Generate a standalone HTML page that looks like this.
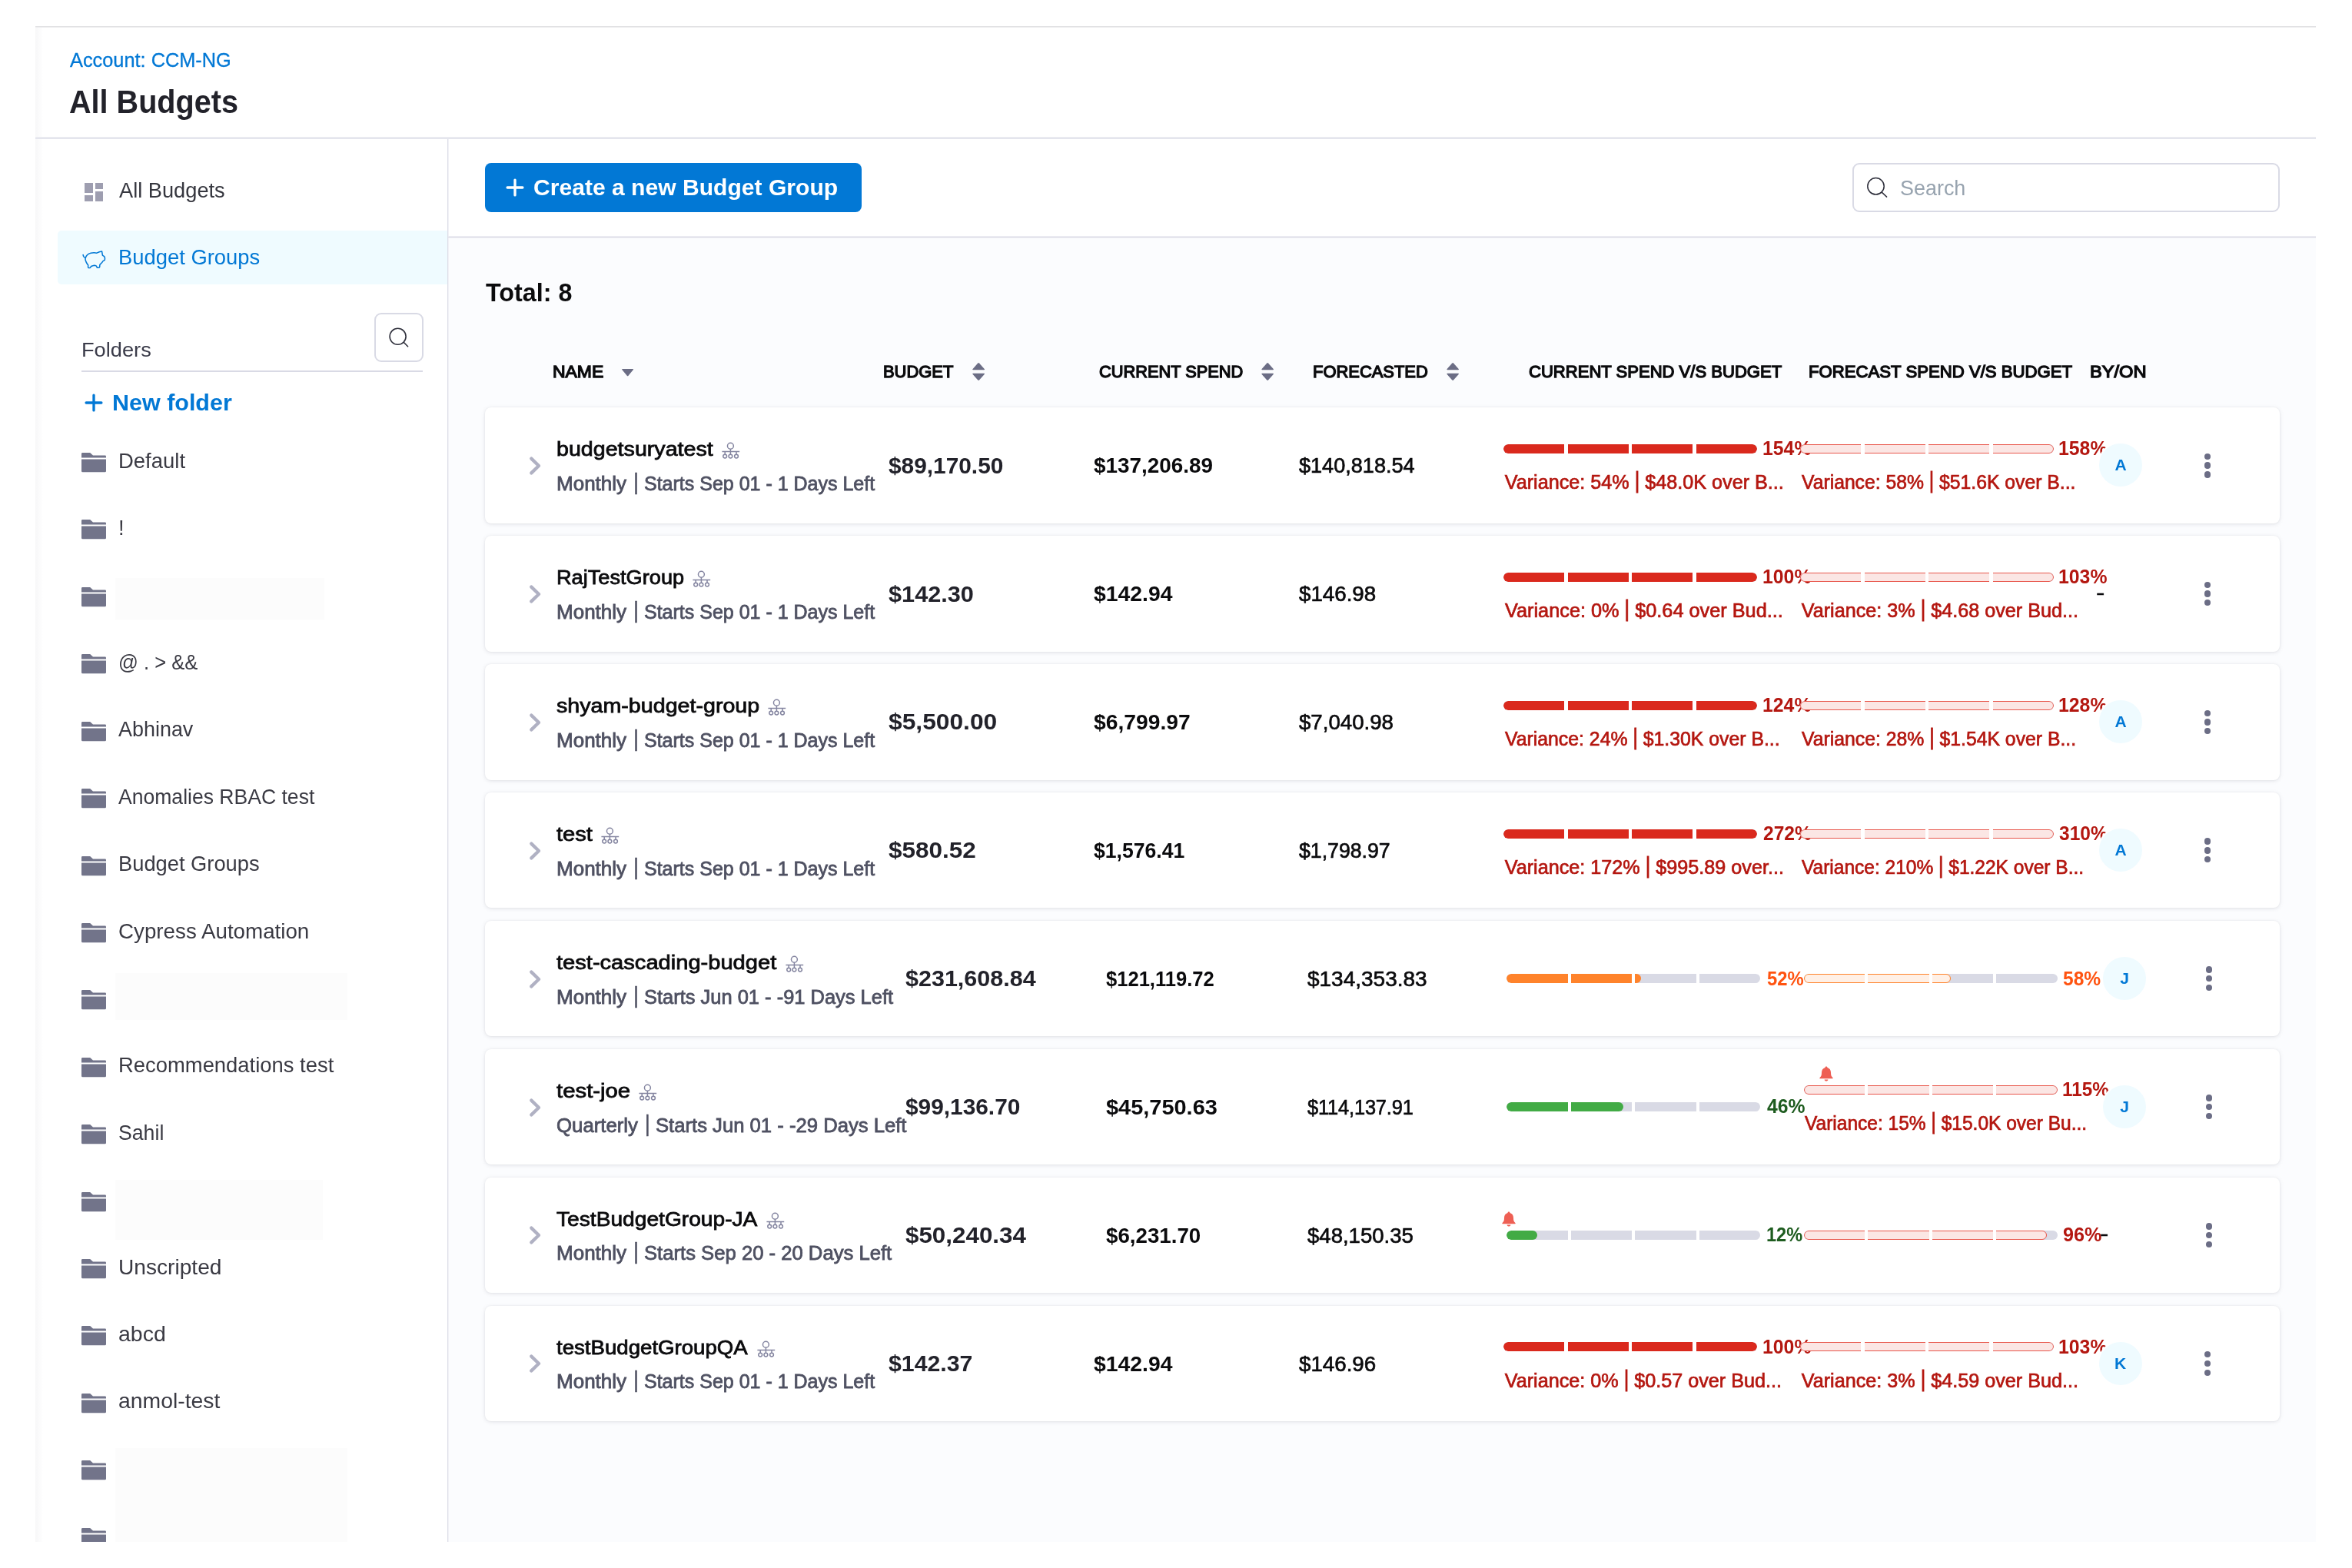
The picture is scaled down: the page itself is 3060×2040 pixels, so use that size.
<!DOCTYPE html>
<html lang="en"><head><meta charset="utf-8"><title>All Budgets</title>
<style>
html,body{margin:0;padding:0;}
body{width:3060px;height:2040px;position:relative;overflow:hidden;background:#fff;font-family:"Liberation Sans",sans-serif;}
body div,body svg,body span{position:absolute;}
span{line-height:1;white-space:pre;transform-origin:0 0;}
svg{overflow:visible;}
span i{display:inline-block;font-style:normal;transform:scaleY(1.17);transform-origin:50% 104%;}
</style></head><body><div id="root" style="left:0;top:0;width:3060px;height:2040px;will-change:transform;">
<div style="left:46px;top:34px;width:2967px;height:1px;background:#E1E1E3;"></div>
<div style="left:46px;top:35px;width:2967px;height:1px;background:#EDEDEF;"></div>
<div style="left:46px;top:36px;width:2967px;height:1970px;background:#fff;"></div>
<div style="left:46px;top:36px;width:10px;height:1970px;background:linear-gradient(90deg,#F7F7F8,#fff);"></div>
<div style="left:583px;top:309px;width:2430px;height:1697px;background:#FBFCFE;"></div>
<div style="left:46px;top:178px;width:2967px;height:1px;background:#F3F3F7;"></div>
<div style="left:46px;top:179px;width:2967px;height:1px;background:#DADBE6;"></div>
<div style="left:46px;top:180px;width:2967px;height:1px;background:#E9E9F0;"></div>
<div style="left:582px;top:181px;width:1px;height:1825px;background:#DCDDE7;"></div>
<div style="left:583px;top:181px;width:1px;height:1825px;background:#F1F1F6;"></div>
<div style="left:583px;top:307px;width:2430px;height:1px;background:#EEEEF3;"></div>
<div style="left:583px;top:308px;width:2430px;height:1px;background:#DADBE6;"></div>
<div style="left:583px;top:309px;width:2430px;height:1px;background:#F0F0F5;"></div>
<span style="left:90.80px;top:66.00px;font-size:25.2px;color:#0278D5;-webkit-text-stroke:0.3px #0278D5;transform:scaleX(1.0060);">Account: CCM-NG</span>
<span style="left:90.36px;top:112.00px;font-size:42.0px;color:#22222A;font-weight:700;transform:scaleX(0.9427);">All Budgets</span>
<div style="left:110.3px;top:238.1px;width:10.4px;height:12.5px;background:#9E9EB0;"></div>
<div style="left:110.3px;top:254.2px;width:10.4px;height:7.5px;background:#9E9EB0;"></div>
<div style="left:123.7px;top:238.1px;width:10.3px;height:7.8px;background:#9E9EB0;"></div>
<div style="left:123.7px;top:249.2px;width:10.3px;height:12.5px;background:#9E9EB0;"></div>
<span style="left:155.00px;top:234.00px;font-size:27.3px;color:#36373F;transform:scaleX(0.9971);">All Budgets</span>
<div style="left:74.5px;top:300px;width:507px;height:70.4px;background:#EFFBFF;border-radius:5px 0 0 5px;"></div>
<svg style="left:106.5px;top:325.3px;" width="31.6" height="25.1" viewBox="0 0 34 27"><path d="M1.2 7 C1.4 9 2.2 10.6 4.6 11.2 C5.5 8.2 8 5.6 12 4.6 C15 3.8 18 3.9 20.4 4.5 C22.5 3.2 25 2.3 27.5 2.1 C27.8 4 28 6 28.6 8 C29.8 8.6 30.6 9.2 31.2 9.8 C31.8 11 31.8 13 31.5 14.3 C30.9 15 30.2 15.3 29.3 15.5 C28.3 17.2 27 18.6 25.7 19.7 L24.6 21 C24.6 22.3 24.5 23.5 24.2 24.6 C23 25.2 21.8 25.2 20.8 25 L19.9 22.8 C18.9 22.3 17.8 22 16.8 21.9 C15.3 22.2 13.8 22.7 12.3 23.2 L11.4 25 C10.3 25.3 9.3 25.3 8.3 25 C8.1 23.8 8.1 22.6 8.3 21.45 C7.2 20.3 6.3 19 5.6 17.4 C4.9 16 4.4 14.5 4.3 13 C4.3 12.3 4.4 11.7 4.6 11.2" fill="none" stroke="#0278D5" stroke-width="1.65" stroke-linejoin="round" stroke-linecap="round"/></svg>
<span style="left:153.64px;top:321.00px;font-size:27.3px;color:#0278D5;transform:scaleX(1.0031);">Budget Groups</span>
<span style="left:105.60px;top:442.00px;font-size:26.6px;color:#3B3C4A;transform:scaleX(1.0234);">Folders</span>
<div style="left:487px;top:407px;width:63.5px;height:63.5px;background:#fff;border:2px solid #D9DAE5;border-radius:9px;box-sizing:border-box;"></div>
<svg style="left:500px;top:421px;" width="38" height="38" viewBox="0 0 38 38"><circle cx="17.6" cy="16.8" r="10.5" fill="none" stroke="#2E2F3B" stroke-width="1.6"/><path d="M25.2 24.3 L30.6 29.8" stroke="#2E2F3B" stroke-width="1.6" stroke-linecap="round"/></svg>
<div style="left:106.3px;top:482.2px;width:443.9px;height:2px;background:#D9DAE5;"></div>
<svg style="left:110px;top:512px;" width="24" height="24" viewBox="0 0 24 24"><path d="M12 2.1V21.9M2.1 12H21.9" stroke="#0278D5" stroke-width="3.3" stroke-linecap="round"/></svg>
<span style="left:145.73px;top:509.00px;font-size:29.4px;color:#0278D5;font-weight:700;transform:scaleX(1.0369);">New folder</span>
<svg style="left:106.2px;top:589.0px;" width="32" height="25.2" viewBox="0 0 32 25.2"><path d="M0 6.6V1.3Q0 0 1.3 0H11.2L15 3.6H30.7Q32 3.6 32 4.9V6.6Z" fill="#72748A"/><path d="M0 8.5H32V23.7Q32 25.2 30.5 25.2H1.5Q0 25.2 0 23.7Z" fill="#72748A"/></svg>
<span style="left:154.00px;top:586.00px;font-size:27.3px;color:#3A3A43;transform:scaleX(1.0064);">Default</span>
<svg style="left:106.2px;top:676.42px;" width="32" height="25.2" viewBox="0 0 32 25.2"><path d="M0 6.6V1.3Q0 0 1.3 0H11.2L15 3.6H30.7Q32 3.6 32 4.9V6.6Z" fill="#72748A"/><path d="M0 8.5H32V23.7Q32 25.2 30.5 25.2H1.5Q0 25.2 0 23.7Z" fill="#72748A"/></svg>
<span style="left:154.00px;top:673.00px;font-size:27.3px;color:#3A3A43;">!</span>
<svg style="left:106.2px;top:763.84px;" width="32" height="25.2" viewBox="0 0 32 25.2"><path d="M0 6.6V1.3Q0 0 1.3 0H11.2L15 3.6H30.7Q32 3.6 32 4.9V6.6Z" fill="#72748A"/><path d="M0 8.5H32V23.7Q32 25.2 30.5 25.2H1.5Q0 25.2 0 23.7Z" fill="#72748A"/></svg>
<svg style="left:106.2px;top:851.26px;" width="32" height="25.2" viewBox="0 0 32 25.2"><path d="M0 6.6V1.3Q0 0 1.3 0H11.2L15 3.6H30.7Q32 3.6 32 4.9V6.6Z" fill="#72748A"/><path d="M0 8.5H32V23.7Q32 25.2 30.5 25.2H1.5Q0 25.2 0 23.7Z" fill="#72748A"/></svg>
<span style="left:154.00px;top:848.00px;font-size:27.3px;color:#3A3A43;transform:scaleX(0.9345);">@ . &gt; &amp;&amp;</span>
<svg style="left:106.2px;top:938.68px;" width="32" height="25.2" viewBox="0 0 32 25.2"><path d="M0 6.6V1.3Q0 0 1.3 0H11.2L15 3.6H30.7Q32 3.6 32 4.9V6.6Z" fill="#72748A"/><path d="M0 8.5H32V23.7Q32 25.2 30.5 25.2H1.5Q0 25.2 0 23.7Z" fill="#72748A"/></svg>
<span style="left:154.00px;top:935.00px;font-size:27.3px;color:#3A3A43;transform:scaleX(0.9868);">Abhinav</span>
<svg style="left:106.2px;top:1026.1px;" width="32" height="25.2" viewBox="0 0 32 25.2"><path d="M0 6.6V1.3Q0 0 1.3 0H11.2L15 3.6H30.7Q32 3.6 32 4.9V6.6Z" fill="#72748A"/><path d="M0 8.5H32V23.7Q32 25.2 30.5 25.2H1.5Q0 25.2 0 23.7Z" fill="#72748A"/></svg>
<span style="left:154.00px;top:1023.00px;font-size:27.3px;color:#3A3A43;transform:scaleX(0.9727);">Anomalies RBAC test</span>
<svg style="left:106.2px;top:1113.52px;" width="32" height="25.2" viewBox="0 0 32 25.2"><path d="M0 6.6V1.3Q0 0 1.3 0H11.2L15 3.6H30.7Q32 3.6 32 4.9V6.6Z" fill="#72748A"/><path d="M0 8.5H32V23.7Q32 25.2 30.5 25.2H1.5Q0 25.2 0 23.7Z" fill="#72748A"/></svg>
<span style="left:154.00px;top:1110.00px;font-size:27.3px;color:#3A3A43;">Budget Groups</span>
<svg style="left:106.2px;top:1200.94px;" width="32" height="25.2" viewBox="0 0 32 25.2"><path d="M0 6.6V1.3Q0 0 1.3 0H11.2L15 3.6H30.7Q32 3.6 32 4.9V6.6Z" fill="#72748A"/><path d="M0 8.5H32V23.7Q32 25.2 30.5 25.2H1.5Q0 25.2 0 23.7Z" fill="#72748A"/></svg>
<span style="left:154.00px;top:1198.00px;font-size:27.3px;color:#3A3A43;transform:scaleX(1.0165);">Cypress Automation</span>
<svg style="left:106.2px;top:1288.36px;" width="32" height="25.2" viewBox="0 0 32 25.2"><path d="M0 6.6V1.3Q0 0 1.3 0H11.2L15 3.6H30.7Q32 3.6 32 4.9V6.6Z" fill="#72748A"/><path d="M0 8.5H32V23.7Q32 25.2 30.5 25.2H1.5Q0 25.2 0 23.7Z" fill="#72748A"/></svg>
<svg style="left:106.2px;top:1375.78px;" width="32" height="25.2" viewBox="0 0 32 25.2"><path d="M0 6.6V1.3Q0 0 1.3 0H11.2L15 3.6H30.7Q32 3.6 32 4.9V6.6Z" fill="#72748A"/><path d="M0 8.5H32V23.7Q32 25.2 30.5 25.2H1.5Q0 25.2 0 23.7Z" fill="#72748A"/></svg>
<span style="left:154.00px;top:1372.00px;font-size:27.3px;color:#3A3A43;transform:scaleX(1.0039);">Recommendations test</span>
<svg style="left:106.2px;top:1463.2px;" width="32" height="25.2" viewBox="0 0 32 25.2"><path d="M0 6.6V1.3Q0 0 1.3 0H11.2L15 3.6H30.7Q32 3.6 32 4.9V6.6Z" fill="#72748A"/><path d="M0 8.5H32V23.7Q32 25.2 30.5 25.2H1.5Q0 25.2 0 23.7Z" fill="#72748A"/></svg>
<span style="left:154.00px;top:1460.00px;font-size:27.3px;color:#3A3A43;transform:scaleX(0.9770);">Sahil</span>
<svg style="left:106.2px;top:1550.62px;" width="32" height="25.2" viewBox="0 0 32 25.2"><path d="M0 6.6V1.3Q0 0 1.3 0H11.2L15 3.6H30.7Q32 3.6 32 4.9V6.6Z" fill="#72748A"/><path d="M0 8.5H32V23.7Q32 25.2 30.5 25.2H1.5Q0 25.2 0 23.7Z" fill="#72748A"/></svg>
<svg style="left:106.2px;top:1638.04px;" width="32" height="25.2" viewBox="0 0 32 25.2"><path d="M0 6.6V1.3Q0 0 1.3 0H11.2L15 3.6H30.7Q32 3.6 32 4.9V6.6Z" fill="#72748A"/><path d="M0 8.5H32V23.7Q32 25.2 30.5 25.2H1.5Q0 25.2 0 23.7Z" fill="#72748A"/></svg>
<span style="left:154.00px;top:1635.00px;font-size:27.3px;color:#3A3A43;transform:scaleX(1.0307);">Unscripted</span>
<svg style="left:106.2px;top:1725.46px;" width="32" height="25.2" viewBox="0 0 32 25.2"><path d="M0 6.6V1.3Q0 0 1.3 0H11.2L15 3.6H30.7Q32 3.6 32 4.9V6.6Z" fill="#72748A"/><path d="M0 8.5H32V23.7Q32 25.2 30.5 25.2H1.5Q0 25.2 0 23.7Z" fill="#72748A"/></svg>
<span style="left:154.00px;top:1722.00px;font-size:27.3px;color:#3A3A43;transform:scaleX(1.0435);">abcd</span>
<svg style="left:106.2px;top:1812.88px;" width="32" height="25.2" viewBox="0 0 32 25.2"><path d="M0 6.6V1.3Q0 0 1.3 0H11.2L15 3.6H30.7Q32 3.6 32 4.9V6.6Z" fill="#72748A"/><path d="M0 8.5H32V23.7Q32 25.2 30.5 25.2H1.5Q0 25.2 0 23.7Z" fill="#72748A"/></svg>
<span style="left:154.00px;top:1809.00px;font-size:27.3px;color:#3A3A43;transform:scaleX(1.0389);">anmol-test</span>
<svg style="left:106.2px;top:1900.3px;" width="32" height="25.2" viewBox="0 0 32 25.2"><path d="M0 6.6V1.3Q0 0 1.3 0H11.2L15 3.6H30.7Q32 3.6 32 4.9V6.6Z" fill="#72748A"/><path d="M0 8.5H32V23.7Q32 25.2 30.5 25.2H1.5Q0 25.2 0 23.7Z" fill="#72748A"/></svg>
<svg style="left:106.2px;top:1987.72px;" width="32" height="25.2" viewBox="0 0 32 25.2"><path d="M0 6.6V1.3Q0 0 1.3 0H11.2L15 3.6H30.7Q32 3.6 32 4.9V6.6Z" fill="#72748A"/><path d="M0 8.5H32V23.7Q32 25.2 30.5 25.2H1.5Q0 25.2 0 23.7Z" fill="#72748A"/></svg>
<div style="left:150.2px;top:751.5px;width:271.7px;height:54.799999999999955px;background:#FCFCFC;"></div>
<div style="left:150.2px;top:1265.8px;width:301.8px;height:61.200000000000045px;background:#FCFCFC;"></div>
<div style="left:150.2px;top:1534.7px;width:269.8px;height:78.29999999999995px;background:#FCFCFC;"></div>
<div style="left:150.2px;top:1883.6px;width:301.5px;height:122.40000000000009px;background:#FCFCFC;"></div>
<div style="left:630.5px;top:212px;width:490.8px;height:64px;background:#0278D5;border-radius:8px;"></div>
<svg style="left:658.3px;top:232.3px;" width="24" height="24" viewBox="0 0 24 24"><path d="M12 2.1V21.9M2.1 12H21.9" stroke="#fff" stroke-width="3.3" stroke-linecap="round"/></svg>
<span style="left:693.52px;top:229.00px;font-size:29.4px;color:#fff;font-weight:700;transform:scaleX(1.0237);">Create a new Budget Group</span>
<div style="left:2410px;top:212px;width:556px;height:64px;background:#fff;border:2px solid #D9DAE5;border-radius:9px;box-sizing:border-box;"></div>
<svg style="left:2422px;top:224px;" width="38" height="38" viewBox="0 0 38 38"><circle cx="18.5" cy="18.3" r="10.7" fill="none" stroke="#2E2F3B" stroke-width="1.5"/><path d="M26.2 26.1 L32.6 32.1" stroke="#2E2F3B" stroke-width="1.5" stroke-linecap="round"/></svg>
<span style="left:2471.77px;top:231.00px;font-size:27.3px;color:#97A3AF;transform:scaleX(0.9868);">Search</span>
<span style="left:631.82px;top:364.00px;font-size:33.6px;color:#0B0B0D;font-weight:700;transform:scaleX(0.9610);">Total: 8</span>
<span style="left:718.64px;top:472.00px;font-size:22.7px;color:#0B0B0D;-webkit-text-stroke:1.35px #0B0B0D;transform:scaleX(1.0109);">NAME</span>
<span style="left:1148.89px;top:472.00px;font-size:22.7px;color:#0B0B0D;-webkit-text-stroke:1.35px #0B0B0D;transform:scaleX(0.9658);">BUDGET</span>
<span style="left:1429.82px;top:472.00px;font-size:22.7px;color:#0B0B0D;-webkit-text-stroke:1.35px #0B0B0D;transform:scaleX(0.9603);">CURRENT SPEND</span>
<span style="left:1708.19px;top:472.00px;font-size:22.7px;color:#0B0B0D;-webkit-text-stroke:1.35px #0B0B0D;transform:scaleX(0.9661);">FORECASTED</span>
<span style="left:1988.71px;top:472.00px;font-size:22.7px;color:#0B0B0D;-webkit-text-stroke:1.35px #0B0B0D;transform:scaleX(0.9718);">CURRENT SPEND V/S BUDGET</span>
<span style="left:2353.38px;top:472.00px;font-size:22.7px;color:#0B0B0D;-webkit-text-stroke:1.35px #0B0B0D;transform:scaleX(0.9767);">FORECAST SPEND V/S BUDGET</span>
<span style="left:2719.10px;top:472.00px;font-size:22.7px;color:#0B0B0D;-webkit-text-stroke:1.35px #0B0B0D;transform:scaleX(1.0418);">BY/ON</span>
<svg style="left:808.8px;top:479.7px;" width="15.2" height="9.3" viewBox="0 0 15.2 9.3"><path d="M0.6 0H14.6Q15.6 0.3 14.9 1.1L8.3 8.9Q7.6 9.6 6.9 8.9L0.3 1.1Q-0.4 0.3 0.6 0Z" fill="#6B6D85"/></svg>
<svg style="left:1265.3px;top:472px;" width="16.3" height="23" viewBox="0 0 16.3 23"><path d="M1 9.2H15.3Q16.5 9 15.7 8L9 0.5Q8.15 -0.3 7.3 0.5L0.6 8Q-0.2 9 1 9.2Z" fill="#6B6D85"/><path d="M1 13.8H15.3Q16.5 14 15.7 15L9 22.5Q8.15 23.3 7.3 22.5L0.6 15Q-0.2 14 1 13.8Z" fill="#6B6D85"/></svg>
<svg style="left:1640.7px;top:472px;" width="16.3" height="23" viewBox="0 0 16.3 23"><path d="M1 9.2H15.3Q16.5 9 15.7 8L9 0.5Q8.15 -0.3 7.3 0.5L0.6 8Q-0.2 9 1 9.2Z" fill="#6B6D85"/><path d="M1 13.8H15.3Q16.5 14 15.7 15L9 22.5Q8.15 23.3 7.3 22.5L0.6 15Q-0.2 14 1 13.8Z" fill="#6B6D85"/></svg>
<svg style="left:1882px;top:472px;" width="16.3" height="23" viewBox="0 0 16.3 23"><path d="M1 9.2H15.3Q16.5 9 15.7 8L9 0.5Q8.15 -0.3 7.3 0.5L0.6 8Q-0.2 9 1 9.2Z" fill="#6B6D85"/><path d="M1 13.8H15.3Q16.5 14 15.7 15L9 22.5Q8.15 23.3 7.3 22.5L0.6 15Q-0.2 14 1 13.8Z" fill="#6B6D85"/></svg>
<div style="left:630.5px;top:530.3px;width:2335.8px;height:150.4px;background:#fff;border-radius:8px;box-shadow:0 0 2px rgba(40,41,61,.05),0 1px 5px rgba(96,97,112,.17);"></div>
<svg style="left:687px;top:592.8px;" width="18" height="26" viewBox="0 0 18 26"><path d="M4.3 3.6 L14 13 L4.3 22.4" fill="none" stroke="#B0B1C3" stroke-width="4.3" stroke-linecap="round" stroke-linejoin="round"/></svg>
<span style="left:724.00px;top:571.00px;font-size:26.6px;color:#0B0B0D;-webkit-text-stroke:0.8px #0B0B0D;transform:scaleX(1.0765);">budgetsuryatest</span>
<svg style="left:939.4px;top:575.3px;" width="24" height="23" viewBox="0 0 24 23"><g fill="none" stroke="#8485A0" stroke-width="1.5"><circle cx="11.4" cy="5.2" r="3.95"/><path d="M11.4 9.2V12.5M0.4 12.5H23.2M4.2 12.5V16M11.4 12.5V16M19 12.5V16"/><circle cx="4.2" cy="18.6" r="2.4"/><circle cx="11.4" cy="18.6" r="2.4"/><circle cx="19" cy="18.6" r="2.4"/></g></svg>
<span style="left:723.90px;top:617.00px;font-size:25.2px;color:#4F5162;-webkit-text-stroke:0.8px #4F5162;transform:scaleX(1.0332);">Monthly</span>
<span style="left:824.30px;top:617.00px;font-size:25.2px;color:#4F5162;-webkit-text-stroke:0.5px #4F5162;transform:scale(1.0000,1.2);transform-origin:0 25.9px;">|</span>
<span style="left:838.16px;top:617.00px;font-size:25.2px;color:#4F5162;-webkit-text-stroke:0.8px #4F5162;transform:scaleX(0.9925);">Starts Sep 01 - 1 Days Left</span>
<span style="left:1155.79px;top:591.00px;font-size:29.5px;color:#22222A;font-weight:700;transform:scaleX(1.0116);">$89,170.50</span>
<span style="left:1422.51px;top:591.00px;font-size:28.2px;color:#0B0B0D;font-weight:700;transform:scaleX(0.9887);">$137,206.89</span>
<span style="left:1690.40px;top:591.00px;font-size:28.2px;color:#0B0B0D;-webkit-text-stroke:0.7px #0B0B0D;transform:scaleX(0.9606);">$140,818.54</span>
<div style="left:1956.2px;top:577.9px;width:329.8px;height:12px;border-radius:6px;background:#D9DAE5;overflow:hidden;"><div style="left:0;top:0;width:329.8px;height:12px;border-radius:6px;background:#DA291D;"></div></div>
<div style="left:2035.42px;top:576.9px;width:4.3px;height:14px;background:#fff;"></div>
<div style="left:2118.95px;top:576.9px;width:4.3px;height:14px;background:#fff;"></div>
<div style="left:2202.47px;top:576.9px;width:4.3px;height:14px;background:#fff;"></div>
<span style="left:2293.02px;top:571.00px;font-size:25.2px;color:#B41710;font-weight:700;transform:scaleX(0.9847);">154%</span>
<span style="left:1957.75px;top:615.00px;font-size:25.2px;color:#B41710;-webkit-text-stroke:0.7px #B41710;">Variance: 54% <i>|</i> $48.0K over B...</span>
<div style="left:2342.2px;top:577.9px;width:329.8px;height:12px;border-radius:6px;background:#D9DAE5;overflow:hidden;"><div style="left:0;top:0;width:329.8px;height:12px;border-radius:6px;background:#FBE6E4;border:1.4px solid #E8574C;box-sizing:border-box;"></div></div>
<div style="left:2421.42px;top:576.9px;width:4.3px;height:14px;background:#fff;"></div>
<div style="left:2504.95px;top:576.9px;width:4.3px;height:14px;background:#fff;"></div>
<div style="left:2588.47px;top:576.9px;width:4.3px;height:14px;background:#fff;"></div>
<span style="left:2678.42px;top:571.00px;font-size:25.2px;color:#B41710;font-weight:700;transform:scaleX(0.9847);">158%</span>
<span style="left:2343.75px;top:615.00px;font-size:25.2px;color:#B41710;-webkit-text-stroke:0.7px #B41710;transform:scaleX(0.9815);">Variance: 58% <i>|</i> $51.6K over B...</span>
<div style="left:2729px;top:575.3px;width:56px;height:56px;border-radius:50%;background:#EFFBFF;border:2px solid #fff;"></div>
<span style="left:2751.50px;top:594.00px;font-size:21px;color:#0278D5;font-weight:700;">A</span>
<div style="left:2867.8px;top:589.6px;width:8.4px;height:8.4px;background:#6B6D85;border-radius:50%;"></div>
<div style="left:2867.8px;top:601.4px;width:8.4px;height:8.4px;background:#6B6D85;border-radius:50%;"></div>
<div style="left:2867.8px;top:613.2px;width:8.4px;height:8.4px;background:#6B6D85;border-radius:50%;"></div>
<div style="left:630.5px;top:697.2px;width:2335.8px;height:150.4px;background:#fff;border-radius:8px;box-shadow:0 0 2px rgba(40,41,61,.05),0 1px 5px rgba(96,97,112,.17);"></div>
<svg style="left:687px;top:759.7px;" width="18" height="26" viewBox="0 0 18 26"><path d="M4.3 3.6 L14 13 L4.3 22.4" fill="none" stroke="#B0B1C3" stroke-width="4.3" stroke-linecap="round" stroke-linejoin="round"/></svg>
<span style="left:724.00px;top:738.00px;font-size:26.6px;color:#0B0B0D;-webkit-text-stroke:0.8px #0B0B0D;transform:scaleX(1.0216);">RajTestGroup</span>
<svg style="left:900.9px;top:742.2px;" width="24" height="23" viewBox="0 0 24 23"><g fill="none" stroke="#8485A0" stroke-width="1.5"><circle cx="11.4" cy="5.2" r="3.95"/><path d="M11.4 9.2V12.5M0.4 12.5H23.2M4.2 12.5V16M11.4 12.5V16M19 12.5V16"/><circle cx="4.2" cy="18.6" r="2.4"/><circle cx="11.4" cy="18.6" r="2.4"/><circle cx="19" cy="18.6" r="2.4"/></g></svg>
<span style="left:723.90px;top:784.00px;font-size:25.2px;color:#4F5162;-webkit-text-stroke:0.8px #4F5162;transform:scaleX(1.0332);">Monthly</span>
<span style="left:824.30px;top:784.00px;font-size:25.2px;color:#4F5162;-webkit-text-stroke:0.5px #4F5162;transform:scale(1.0000,1.2);transform-origin:0 25.9px;">|</span>
<span style="left:838.16px;top:784.00px;font-size:25.2px;color:#4F5162;-webkit-text-stroke:0.8px #4F5162;transform:scaleX(0.9925);">Starts Sep 01 - 1 Days Left</span>
<span style="left:1155.78px;top:758.00px;font-size:29.5px;color:#22222A;font-weight:700;transform:scaleX(1.0400);">$142.30</span>
<span style="left:1422.50px;top:758.00px;font-size:28.2px;color:#0B0B0D;font-weight:700;transform:scaleX(1.0054);">$142.94</span>
<span style="left:1690.40px;top:758.00px;font-size:28.2px;color:#0B0B0D;-webkit-text-stroke:0.7px #0B0B0D;transform:scaleX(0.9832);">$146.98</span>
<div style="left:1956.2px;top:744.8px;width:329.8px;height:12px;border-radius:6px;background:#D9DAE5;overflow:hidden;"><div style="left:0;top:0;width:329.8px;height:12px;border-radius:6px;background:#DA291D;"></div></div>
<div style="left:2035.42px;top:743.8px;width:4.3px;height:14px;background:#fff;"></div>
<div style="left:2118.95px;top:743.8px;width:4.3px;height:14px;background:#fff;"></div>
<div style="left:2202.47px;top:743.8px;width:4.3px;height:14px;background:#fff;"></div>
<span style="left:2293.02px;top:738.00px;font-size:25.2px;color:#B41710;font-weight:700;transform:scaleX(0.9847);">100%</span>
<span style="left:1957.75px;top:782.00px;font-size:25.2px;color:#B41710;-webkit-text-stroke:0.7px #B41710;transform:scaleX(1.0042);">Variance: 0% <i>|</i> $0.64 over Bud...</span>
<div style="left:2342.2px;top:744.8px;width:329.8px;height:12px;border-radius:6px;background:#D9DAE5;overflow:hidden;"><div style="left:0;top:0;width:329.8px;height:12px;border-radius:6px;background:#FBE6E4;border:1.4px solid #E8574C;box-sizing:border-box;"></div></div>
<div style="left:2421.42px;top:743.8px;width:4.3px;height:14px;background:#fff;"></div>
<div style="left:2504.95px;top:743.8px;width:4.3px;height:14px;background:#fff;"></div>
<div style="left:2588.47px;top:743.8px;width:4.3px;height:14px;background:#fff;"></div>
<span style="left:2678.42px;top:738.00px;font-size:25.2px;color:#B41710;font-weight:700;transform:scaleX(0.9847);">103%</span>
<span style="left:2343.75px;top:782.00px;font-size:25.2px;color:#B41710;-webkit-text-stroke:0.7px #B41710;">Variance: 3% <i>|</i> $4.68 over Bud...</span>
<span style="left:2727.05px;top:759.00px;font-size:25.2px;color:#0B0B0D;-webkit-text-stroke:0.4px #0B0B0D;transform:scaleX(1.3538);">-</span>
<div style="left:2867.8px;top:756.5px;width:8.4px;height:8.4px;background:#6B6D85;border-radius:50%;"></div>
<div style="left:2867.8px;top:768.3px;width:8.4px;height:8.4px;background:#6B6D85;border-radius:50%;"></div>
<div style="left:2867.8px;top:780.1px;width:8.4px;height:8.4px;background:#6B6D85;border-radius:50%;"></div>
<div style="left:630.5px;top:864.2px;width:2335.8px;height:150.4px;background:#fff;border-radius:8px;box-shadow:0 0 2px rgba(40,41,61,.05),0 1px 5px rgba(96,97,112,.17);"></div>
<svg style="left:687px;top:926.7px;" width="18" height="26" viewBox="0 0 18 26"><path d="M4.3 3.6 L14 13 L4.3 22.4" fill="none" stroke="#B0B1C3" stroke-width="4.3" stroke-linecap="round" stroke-linejoin="round"/></svg>
<span style="left:724.00px;top:905.00px;font-size:26.6px;color:#0B0B0D;-webkit-text-stroke:0.8px #0B0B0D;transform:scaleX(1.0766);">shyam-budget-group</span>
<svg style="left:998.9px;top:909.2px;" width="24" height="23" viewBox="0 0 24 23"><g fill="none" stroke="#8485A0" stroke-width="1.5"><circle cx="11.4" cy="5.2" r="3.95"/><path d="M11.4 9.2V12.5M0.4 12.5H23.2M4.2 12.5V16M11.4 12.5V16M19 12.5V16"/><circle cx="4.2" cy="18.6" r="2.4"/><circle cx="11.4" cy="18.6" r="2.4"/><circle cx="19" cy="18.6" r="2.4"/></g></svg>
<span style="left:723.90px;top:951.00px;font-size:25.2px;color:#4F5162;-webkit-text-stroke:0.8px #4F5162;transform:scaleX(1.0332);">Monthly</span>
<span style="left:824.30px;top:951.00px;font-size:25.2px;color:#4F5162;-webkit-text-stroke:0.5px #4F5162;transform:scale(1.0000,1.2);transform-origin:0 25.9px;">|</span>
<span style="left:838.16px;top:951.00px;font-size:25.2px;color:#4F5162;-webkit-text-stroke:0.8px #4F5162;transform:scaleX(0.9925);">Starts Sep 01 - 1 Days Left</span>
<span style="left:1155.76px;top:924.00px;font-size:29.5px;color:#22222A;font-weight:700;transform:scaleX(1.0764);">$5,500.00</span>
<span style="left:1422.50px;top:925.00px;font-size:28.2px;color:#0B0B0D;font-weight:700;transform:scaleX(1.0020);">$6,799.97</span>
<span style="left:1690.40px;top:925.00px;font-size:28.2px;color:#0B0B0D;-webkit-text-stroke:0.7px #0B0B0D;transform:scaleX(0.9807);">$7,040.98</span>
<div style="left:1956.2px;top:911.8px;width:329.8px;height:12px;border-radius:6px;background:#D9DAE5;overflow:hidden;"><div style="left:0;top:0;width:329.8px;height:12px;border-radius:6px;background:#DA291D;"></div></div>
<div style="left:2035.42px;top:910.8px;width:4.3px;height:14px;background:#fff;"></div>
<div style="left:2118.95px;top:910.8px;width:4.3px;height:14px;background:#fff;"></div>
<div style="left:2202.47px;top:910.8px;width:4.3px;height:14px;background:#fff;"></div>
<span style="left:2293.02px;top:905.00px;font-size:25.2px;color:#B41710;font-weight:700;transform:scaleX(0.9847);">124%</span>
<span style="left:1957.75px;top:949.00px;font-size:25.2px;color:#B41710;-webkit-text-stroke:0.7px #B41710;transform:scaleX(0.9848);">Variance: 24% <i>|</i> $1.30K over B...</span>
<div style="left:2342.2px;top:911.8px;width:329.8px;height:12px;border-radius:6px;background:#D9DAE5;overflow:hidden;"><div style="left:0;top:0;width:329.8px;height:12px;border-radius:6px;background:#FBE6E4;border:1.4px solid #E8574C;box-sizing:border-box;"></div></div>
<div style="left:2421.42px;top:910.8px;width:4.3px;height:14px;background:#fff;"></div>
<div style="left:2504.95px;top:910.8px;width:4.3px;height:14px;background:#fff;"></div>
<div style="left:2588.47px;top:910.8px;width:4.3px;height:14px;background:#fff;"></div>
<span style="left:2678.42px;top:905.00px;font-size:25.2px;color:#B41710;font-weight:700;transform:scaleX(0.9847);">128%</span>
<span style="left:2343.75px;top:949.00px;font-size:25.2px;color:#B41710;-webkit-text-stroke:0.7px #B41710;transform:scaleX(0.9834);">Variance: 28% <i>|</i> $1.54K over B...</span>
<div style="left:2729px;top:909.2px;width:56px;height:56px;border-radius:50%;background:#EFFBFF;border:2px solid #fff;"></div>
<span style="left:2751.50px;top:928.00px;font-size:21px;color:#0278D5;font-weight:700;">A</span>
<div style="left:2867.8px;top:923.5px;width:8.4px;height:8.4px;background:#6B6D85;border-radius:50%;"></div>
<div style="left:2867.8px;top:935.3px;width:8.4px;height:8.4px;background:#6B6D85;border-radius:50%;"></div>
<div style="left:2867.8px;top:947.1px;width:8.4px;height:8.4px;background:#6B6D85;border-radius:50%;"></div>
<div style="left:630.5px;top:1031.1px;width:2335.8px;height:150.4px;background:#fff;border-radius:8px;box-shadow:0 0 2px rgba(40,41,61,.05),0 1px 5px rgba(96,97,112,.17);"></div>
<svg style="left:687px;top:1093.6px;" width="18" height="26" viewBox="0 0 18 26"><path d="M4.3 3.6 L14 13 L4.3 22.4" fill="none" stroke="#B0B1C3" stroke-width="4.3" stroke-linecap="round" stroke-linejoin="round"/></svg>
<span style="left:724.00px;top:1072.00px;font-size:26.6px;color:#0B0B0D;-webkit-text-stroke:0.8px #0B0B0D;transform:scaleX(1.0930);">test</span>
<svg style="left:782.4px;top:1076.1px;" width="24" height="23" viewBox="0 0 24 23"><g fill="none" stroke="#8485A0" stroke-width="1.5"><circle cx="11.4" cy="5.2" r="3.95"/><path d="M11.4 9.2V12.5M0.4 12.5H23.2M4.2 12.5V16M11.4 12.5V16M19 12.5V16"/><circle cx="4.2" cy="18.6" r="2.4"/><circle cx="11.4" cy="18.6" r="2.4"/><circle cx="19" cy="18.6" r="2.4"/></g></svg>
<span style="left:723.90px;top:1118.00px;font-size:25.2px;color:#4F5162;-webkit-text-stroke:0.8px #4F5162;transform:scaleX(1.0332);">Monthly</span>
<span style="left:824.30px;top:1118.00px;font-size:25.2px;color:#4F5162;-webkit-text-stroke:0.5px #4F5162;transform:scale(1.0000,1.2);transform-origin:0 25.9px;">|</span>
<span style="left:838.16px;top:1118.00px;font-size:25.2px;color:#4F5162;-webkit-text-stroke:0.8px #4F5162;transform:scaleX(0.9925);">Starts Sep 01 - 1 Days Left</span>
<span style="left:1155.77px;top:1091.00px;font-size:29.5px;color:#22222A;font-weight:700;transform:scaleX(1.0676);">$580.52</span>
<span style="left:1422.53px;top:1092.00px;font-size:28.2px;color:#0B0B0D;font-weight:700;transform:scaleX(0.9433);">$1,576.41</span>
<span style="left:1690.40px;top:1092.00px;font-size:28.2px;color:#0B0B0D;-webkit-text-stroke:0.7px #0B0B0D;transform:scaleX(0.9465);">$1,798.97</span>
<div style="left:1956.2px;top:1078.7px;width:329.8px;height:12px;border-radius:6px;background:#D9DAE5;overflow:hidden;"><div style="left:0;top:0;width:329.8px;height:12px;border-radius:6px;background:#DA291D;"></div></div>
<div style="left:2035.42px;top:1077.7px;width:4.3px;height:14px;background:#fff;"></div>
<div style="left:2118.95px;top:1077.7px;width:4.3px;height:14px;background:#fff;"></div>
<div style="left:2202.47px;top:1077.7px;width:4.3px;height:14px;background:#fff;"></div>
<span style="left:2293.52px;top:1072.00px;font-size:25.2px;color:#B41710;font-weight:700;transform:scaleX(0.9769);">272%</span>
<span style="left:1957.75px;top:1116.00px;font-size:25.2px;color:#B41710;-webkit-text-stroke:0.7px #B41710;">Variance: 172% <i>|</i> $995.89 over...</span>
<div style="left:2342.2px;top:1078.7px;width:329.8px;height:12px;border-radius:6px;background:#D9DAE5;overflow:hidden;"><div style="left:0;top:0;width:329.8px;height:12px;border-radius:6px;background:#FBE6E4;border:1.4px solid #E8574C;box-sizing:border-box;"></div></div>
<div style="left:2421.42px;top:1077.7px;width:4.3px;height:14px;background:#fff;"></div>
<div style="left:2504.95px;top:1077.7px;width:4.3px;height:14px;background:#fff;"></div>
<div style="left:2588.47px;top:1077.7px;width:4.3px;height:14px;background:#fff;"></div>
<span style="left:2679.17px;top:1072.00px;font-size:25.2px;color:#B41710;font-weight:700;transform:scaleX(0.9730);">310%</span>
<span style="left:2343.74px;top:1116.00px;font-size:25.2px;color:#B41710;-webkit-text-stroke:0.7px #B41710;transform:scaleX(0.9734);">Variance: 210% <i>|</i> $1.22K over B...</span>
<div style="left:2729px;top:1076.1px;width:56px;height:56px;border-radius:50%;background:#EFFBFF;border:2px solid #fff;"></div>
<span style="left:2751.50px;top:1095.00px;font-size:21px;color:#0278D5;font-weight:700;">A</span>
<div style="left:2867.8px;top:1090.4px;width:8.4px;height:8.4px;background:#6B6D85;border-radius:50%;"></div>
<div style="left:2867.8px;top:1102.2px;width:8.4px;height:8.4px;background:#6B6D85;border-radius:50%;"></div>
<div style="left:2867.8px;top:1114.0px;width:8.4px;height:8.4px;background:#6B6D85;border-radius:50%;"></div>
<div style="left:630.5px;top:1198.0px;width:2335.8px;height:150.4px;background:#fff;border-radius:8px;box-shadow:0 0 2px rgba(40,41,61,.05),0 1px 5px rgba(96,97,112,.17);"></div>
<svg style="left:687px;top:1260.5px;" width="18" height="26" viewBox="0 0 18 26"><path d="M4.3 3.6 L14 13 L4.3 22.4" fill="none" stroke="#B0B1C3" stroke-width="4.3" stroke-linecap="round" stroke-linejoin="round"/></svg>
<span style="left:724.00px;top:1239.00px;font-size:26.6px;color:#0B0B0D;-webkit-text-stroke:0.8px #0B0B0D;transform:scaleX(1.0938);">test-cascading-budget</span>
<svg style="left:1021.7px;top:1243.0px;" width="24" height="23" viewBox="0 0 24 23"><g fill="none" stroke="#8485A0" stroke-width="1.5"><circle cx="11.4" cy="5.2" r="3.95"/><path d="M11.4 9.2V12.5M0.4 12.5H23.2M4.2 12.5V16M11.4 12.5V16M19 12.5V16"/><circle cx="4.2" cy="18.6" r="2.4"/><circle cx="11.4" cy="18.6" r="2.4"/><circle cx="19" cy="18.6" r="2.4"/></g></svg>
<span style="left:723.90px;top:1285.00px;font-size:25.2px;color:#4F5162;-webkit-text-stroke:0.8px #4F5162;transform:scaleX(1.0332);">Monthly</span>
<span style="left:824.30px;top:1285.00px;font-size:25.2px;color:#4F5162;-webkit-text-stroke:0.5px #4F5162;transform:scale(1.0000,1.2);transform-origin:0 25.9px;">|</span>
<span style="left:838.14px;top:1285.00px;font-size:25.2px;color:#4F5162;-webkit-text-stroke:0.8px #4F5162;transform:scaleX(1.0109);">Starts Jun 01 - -91 Days Left</span>
<span style="left:1178.28px;top:1258.00px;font-size:29.5px;color:#22222A;font-weight:700;transform:scaleX(1.0340);">$231,608.84</span>
<span style="left:1439.25px;top:1259.00px;font-size:28.2px;color:#0B0B0D;font-weight:700;transform:scaleX(0.9068);">$121,119.72</span>
<span style="left:1700.60px;top:1259.00px;font-size:28.2px;color:#0B0B0D;-webkit-text-stroke:0.7px #0B0B0D;transform:scaleX(0.9926);">$134,353.83</span>
<div style="left:1960.4px;top:1267.2px;width:329.8px;height:12px;border-radius:6px;background:#D9DAE5;overflow:hidden;"><div style="left:0;top:0;width:174.8px;height:12px;border-radius:6px;background:#FF832B;"></div></div>
<div style="left:2039.62px;top:1266.2px;width:4.3px;height:14px;background:#fff;"></div>
<div style="left:2123.15px;top:1266.2px;width:4.3px;height:14px;background:#fff;"></div>
<div style="left:2206.68px;top:1266.2px;width:4.3px;height:14px;background:#fff;"></div>
<span style="left:2298.99px;top:1261.00px;font-size:25.2px;color:#FF5310;font-weight:700;transform:scaleX(0.9449);">52%</span>
<div style="left:2346.8px;top:1267.2px;width:329.8px;height:12px;border-radius:6px;background:#D9DAE5;overflow:hidden;"><div style="left:0;top:0;width:191.3px;height:12px;border-radius:6px;background:#FFF0E6;border:1.4px solid #FF832B;box-sizing:border-box;"></div></div>
<div style="left:2426.03px;top:1266.2px;width:4.3px;height:14px;background:#fff;"></div>
<div style="left:2509.55px;top:1266.2px;width:4.3px;height:14px;background:#fff;"></div>
<div style="left:2593.08px;top:1266.2px;width:4.3px;height:14px;background:#fff;"></div>
<span style="left:2684.17px;top:1261.00px;font-size:25.2px;color:#FF5310;font-weight:700;transform:scaleX(0.9735);">58%</span>
<div style="left:2733.6px;top:1243.0px;width:56px;height:56px;border-radius:50%;background:#EFFBFF;border:2px solid #fff;"></div>
<span style="left:2758.35px;top:1262.00px;font-size:21px;color:#0278D5;font-weight:700;">J</span>
<div style="left:2870.0px;top:1257.3px;width:8.4px;height:8.4px;background:#6B6D85;border-radius:50%;"></div>
<div style="left:2870.0px;top:1269.1px;width:8.4px;height:8.4px;background:#6B6D85;border-radius:50%;"></div>
<div style="left:2870.0px;top:1280.9px;width:8.4px;height:8.4px;background:#6B6D85;border-radius:50%;"></div>
<div style="left:630.5px;top:1365.0px;width:2335.8px;height:150.4px;background:#fff;border-radius:8px;box-shadow:0 0 2px rgba(40,41,61,.05),0 1px 5px rgba(96,97,112,.17);"></div>
<svg style="left:687px;top:1427.5px;" width="18" height="26" viewBox="0 0 18 26"><path d="M4.3 3.6 L14 13 L4.3 22.4" fill="none" stroke="#B0B1C3" stroke-width="4.3" stroke-linecap="round" stroke-linejoin="round"/></svg>
<span style="left:724.00px;top:1406.00px;font-size:26.6px;color:#0B0B0D;-webkit-text-stroke:0.8px #0B0B0D;transform:scaleX(1.1029);">test-joe</span>
<svg style="left:830.8px;top:1410.0px;" width="24" height="23" viewBox="0 0 24 23"><g fill="none" stroke="#8485A0" stroke-width="1.5"><circle cx="11.4" cy="5.2" r="3.95"/><path d="M11.4 9.2V12.5M0.4 12.5H23.2M4.2 12.5V16M11.4 12.5V16M19 12.5V16"/><circle cx="4.2" cy="18.6" r="2.4"/><circle cx="11.4" cy="18.6" r="2.4"/><circle cx="19" cy="18.6" r="2.4"/></g></svg>
<span style="left:723.90px;top:1452.00px;font-size:25.2px;color:#4F5162;-webkit-text-stroke:0.8px #4F5162;transform:scaleX(1.0231);">Quarterly</span>
<span style="left:839.00px;top:1452.00px;font-size:25.2px;color:#4F5162;-webkit-text-stroke:0.5px #4F5162;transform:scale(1.0000,1.2);transform-origin:0 25.9px;">|</span>
<span style="left:852.84px;top:1452.00px;font-size:25.2px;color:#4F5162;-webkit-text-stroke:0.8px #4F5162;transform:scaleX(1.0184);">Starts Jun 01 - -29 Days Left</span>
<span style="left:1178.29px;top:1425.00px;font-size:29.5px;color:#22222A;font-weight:700;transform:scaleX(1.0116);">$99,136.70</span>
<span style="left:1439.19px;top:1426.00px;font-size:28.2px;color:#0B0B0D;font-weight:700;transform:scaleX(1.0265);">$45,750.63</span>
<span style="left:1700.60px;top:1426.00px;font-size:28.2px;color:#0B0B0D;letter-spacing:-0.153px;-webkit-text-stroke:0.7px #0B0B0D;transform:scaleX(0.9000);">$114,137.91</span>
<div style="left:1960.4px;top:1434.2px;width:329.8px;height:12px;border-radius:6px;background:#D9DAE5;overflow:hidden;"><div style="left:0;top:0;width:151.7px;height:12px;border-radius:6px;background:#42AB45;"></div></div>
<div style="left:2039.62px;top:1433.2px;width:4.3px;height:14px;background:#fff;"></div>
<div style="left:2123.15px;top:1433.2px;width:4.3px;height:14px;background:#fff;"></div>
<div style="left:2206.68px;top:1433.2px;width:4.3px;height:14px;background:#fff;"></div>
<span style="left:2299.21px;top:1427.00px;font-size:25.2px;color:#1E5C1F;font-weight:700;transform:scaleX(0.9827);">46%</span>
<div style="left:2346.8px;top:1411.7px;width:329.8px;height:12px;border-radius:6px;background:#D9DAE5;overflow:hidden;"><div style="left:0;top:0;width:329.8px;height:12px;border-radius:6px;background:#FBE6E4;border:1.4px solid #E8574C;box-sizing:border-box;"></div></div>
<div style="left:2426.03px;top:1410.7px;width:4.3px;height:14px;background:#fff;"></div>
<div style="left:2509.55px;top:1410.7px;width:4.3px;height:14px;background:#fff;"></div>
<div style="left:2593.08px;top:1410.7px;width:4.3px;height:14px;background:#fff;"></div>
<span style="left:2683.46px;top:1405.00px;font-size:25.2px;color:#B41710;font-weight:700;transform:scaleX(0.9630);">115%</span>
<span style="left:2348.34px;top:1449.00px;font-size:25.2px;color:#B41710;-webkit-text-stroke:0.7px #B41710;transform:scaleX(0.9736);">Variance: 15% <i>|</i> $15.0K over Bu...</span>
<svg style="left:2366.7px;top:1387.0px;" width="18" height="20" viewBox="0 0 18 20"><path d="M9 0.6C9.9 0.6 10.5 1.2 10.5 2.1C13.4 2.9 15 5.4 15 8.4C15 11.8 15.6 13.4 17.4 14.9C17.9 15.4 17.7 16.3 16.8 16.3H1.2C0.3 16.3 0.1 15.4 0.6 14.9C2.4 13.4 3 11.8 3 8.4C3 5.4 4.6 2.9 7.5 2.1C7.5 1.2 8.1 0.6 9 0.6Z" fill="#EE5F54"/><path d="M6.6 17.4H11.4C11.2 18.8 10.2 19.6 9 19.6C7.8 19.6 6.8 18.8 6.6 17.4Z" fill="#EE5F54"/></svg>
<div style="left:2733.6px;top:1410.0px;width:56px;height:56px;border-radius:50%;background:#EFFBFF;border:2px solid #fff;"></div>
<span style="left:2758.35px;top:1429.00px;font-size:21px;color:#0278D5;font-weight:700;">J</span>
<div style="left:2870.0px;top:1424.2px;width:8.4px;height:8.4px;background:#6B6D85;border-radius:50%;"></div>
<div style="left:2870.0px;top:1436.0px;width:8.4px;height:8.4px;background:#6B6D85;border-radius:50%;"></div>
<div style="left:2870.0px;top:1447.8px;width:8.4px;height:8.4px;background:#6B6D85;border-radius:50%;"></div>
<div style="left:630.5px;top:1531.9px;width:2335.8px;height:150.4px;background:#fff;border-radius:8px;box-shadow:0 0 2px rgba(40,41,61,.05),0 1px 5px rgba(96,97,112,.17);"></div>
<svg style="left:687px;top:1594.4px;" width="18" height="26" viewBox="0 0 18 26"><path d="M4.3 3.6 L14 13 L4.3 22.4" fill="none" stroke="#B0B1C3" stroke-width="4.3" stroke-linecap="round" stroke-linejoin="round"/></svg>
<span style="left:724.00px;top:1573.00px;font-size:26.6px;color:#0B0B0D;-webkit-text-stroke:0.8px #0B0B0D;transform:scaleX(1.0588);">TestBudgetGroup-JA</span>
<svg style="left:997.2px;top:1576.9px;" width="24" height="23" viewBox="0 0 24 23"><g fill="none" stroke="#8485A0" stroke-width="1.5"><circle cx="11.4" cy="5.2" r="3.95"/><path d="M11.4 9.2V12.5M0.4 12.5H23.2M4.2 12.5V16M11.4 12.5V16M19 12.5V16"/><circle cx="4.2" cy="18.6" r="2.4"/><circle cx="11.4" cy="18.6" r="2.4"/><circle cx="19" cy="18.6" r="2.4"/></g></svg>
<span style="left:723.90px;top:1618.00px;font-size:25.2px;color:#4F5162;-webkit-text-stroke:0.8px #4F5162;transform:scaleX(1.0332);">Monthly</span>
<span style="left:824.30px;top:1618.00px;font-size:25.2px;color:#4F5162;-webkit-text-stroke:0.5px #4F5162;transform:scale(1.0000,1.2);transform-origin:0 25.9px;">|</span>
<span style="left:838.14px;top:1618.00px;font-size:25.2px;color:#4F5162;-webkit-text-stroke:0.8px #4F5162;transform:scaleX(1.0184);">Starts Sep 20 - 20 Days Left</span>
<span style="left:1178.27px;top:1592.00px;font-size:29.5px;color:#22222A;font-weight:700;transform:scaleX(1.0626);">$50,240.34</span>
<span style="left:1439.21px;top:1593.00px;font-size:28.2px;color:#0B0B0D;font-weight:700;transform:scaleX(0.9826);">$6,231.70</span>
<span style="left:1700.60px;top:1593.00px;font-size:28.2px;color:#0B0B0D;-webkit-text-stroke:0.7px #0B0B0D;transform:scaleX(0.9768);">$48,150.35</span>
<div style="left:1960.4px;top:1601.1px;width:329.8px;height:12px;border-radius:6px;background:#D9DAE5;overflow:hidden;"><div style="left:0;top:0;width:39.6px;height:12px;border-radius:6px;background:#42AB45;"></div></div>
<div style="left:2039.62px;top:1600.1px;width:4.3px;height:14px;background:#fff;"></div>
<div style="left:2123.15px;top:1600.1px;width:4.3px;height:14px;background:#fff;"></div>
<div style="left:2206.68px;top:1600.1px;width:4.3px;height:14px;background:#fff;"></div>
<span style="left:2298.30px;top:1594.00px;font-size:25.2px;color:#1E5C1F;font-weight:700;transform:scaleX(0.9347);">12%</span>
<div style="left:2346.8px;top:1601.1px;width:329.8px;height:12px;border-radius:6px;background:#D9DAE5;overflow:hidden;"><div style="left:0;top:0;width:316.6px;height:12px;border-radius:6px;background:#FBE6E4;border:1.4px solid #E8574C;box-sizing:border-box;"></div></div>
<div style="left:2426.03px;top:1600.1px;width:4.3px;height:14px;background:#fff;"></div>
<div style="left:2509.55px;top:1600.1px;width:4.3px;height:14px;background:#fff;"></div>
<div style="left:2593.08px;top:1600.1px;width:4.3px;height:14px;background:#fff;"></div>
<span style="left:2683.90px;top:1594.00px;font-size:25.2px;color:#B41710;font-weight:700;">96%</span>
<svg style="left:1954px;top:1575.9px;" width="18" height="20" viewBox="0 0 18 20"><path d="M9 0.6C9.9 0.6 10.5 1.2 10.5 2.1C13.4 2.9 15 5.4 15 8.4C15 11.8 15.6 13.4 17.4 14.9C17.9 15.4 17.7 16.3 16.8 16.3H1.2C0.3 16.3 0.1 15.4 0.6 14.9C2.4 13.4 3 11.8 3 8.4C3 5.4 4.6 2.9 7.5 2.1C7.5 1.2 8.1 0.6 9 0.6Z" fill="#EE5F54"/><path d="M6.6 17.4H11.4C11.2 18.8 10.2 19.6 9 19.6C7.8 19.6 6.8 18.8 6.6 17.4Z" fill="#EE5F54"/></svg>
<span style="left:2731.65px;top:1593.00px;font-size:25.2px;color:#0B0B0D;-webkit-text-stroke:0.4px #0B0B0D;transform:scaleX(1.3538);">-</span>
<div style="left:2870.0px;top:1591.2px;width:8.4px;height:8.4px;background:#6B6D85;border-radius:50%;"></div>
<div style="left:2870.0px;top:1603.0px;width:8.4px;height:8.4px;background:#6B6D85;border-radius:50%;"></div>
<div style="left:2870.0px;top:1614.8px;width:8.4px;height:8.4px;background:#6B6D85;border-radius:50%;"></div>
<div style="left:630.5px;top:1698.8px;width:2335.8px;height:150.4px;background:#fff;border-radius:8px;box-shadow:0 0 2px rgba(40,41,61,.05),0 1px 5px rgba(96,97,112,.17);"></div>
<svg style="left:687px;top:1761.3px;" width="18" height="26" viewBox="0 0 18 26"><path d="M4.3 3.6 L14 13 L4.3 22.4" fill="none" stroke="#B0B1C3" stroke-width="4.3" stroke-linecap="round" stroke-linejoin="round"/></svg>
<span style="left:724.00px;top:1740.00px;font-size:26.6px;color:#0B0B0D;-webkit-text-stroke:0.8px #0B0B0D;transform:scaleX(1.0387);">testBudgetGroupQA</span>
<svg style="left:984.7px;top:1743.8px;" width="24" height="23" viewBox="0 0 24 23"><g fill="none" stroke="#8485A0" stroke-width="1.5"><circle cx="11.4" cy="5.2" r="3.95"/><path d="M11.4 9.2V12.5M0.4 12.5H23.2M4.2 12.5V16M11.4 12.5V16M19 12.5V16"/><circle cx="4.2" cy="18.6" r="2.4"/><circle cx="11.4" cy="18.6" r="2.4"/><circle cx="19" cy="18.6" r="2.4"/></g></svg>
<span style="left:723.90px;top:1785.00px;font-size:25.2px;color:#4F5162;-webkit-text-stroke:0.8px #4F5162;transform:scaleX(1.0332);">Monthly</span>
<span style="left:824.30px;top:1785.00px;font-size:25.2px;color:#4F5162;-webkit-text-stroke:0.5px #4F5162;transform:scale(1.0000,1.2);transform-origin:0 25.9px;">|</span>
<span style="left:838.16px;top:1785.00px;font-size:25.2px;color:#4F5162;-webkit-text-stroke:0.8px #4F5162;transform:scaleX(0.9925);">Starts Sep 01 - 1 Days Left</span>
<span style="left:1155.79px;top:1759.00px;font-size:29.5px;color:#22222A;font-weight:700;transform:scaleX(1.0263);">$142.37</span>
<span style="left:1422.50px;top:1760.00px;font-size:28.2px;color:#0B0B0D;font-weight:700;transform:scaleX(1.0054);">$142.94</span>
<span style="left:1690.40px;top:1760.00px;font-size:28.2px;color:#0B0B0D;-webkit-text-stroke:0.7px #0B0B0D;transform:scaleX(0.9832);">$146.96</span>
<div style="left:1956.2px;top:1746.4px;width:329.8px;height:12px;border-radius:6px;background:#D9DAE5;overflow:hidden;"><div style="left:0;top:0;width:329.8px;height:12px;border-radius:6px;background:#DA291D;"></div></div>
<div style="left:2035.42px;top:1745.4px;width:4.3px;height:14px;background:#fff;"></div>
<div style="left:2118.95px;top:1745.4px;width:4.3px;height:14px;background:#fff;"></div>
<div style="left:2202.47px;top:1745.4px;width:4.3px;height:14px;background:#fff;"></div>
<span style="left:2293.02px;top:1740.00px;font-size:25.2px;color:#B41710;font-weight:700;transform:scaleX(0.9847);">100%</span>
<span style="left:1957.75px;top:1784.00px;font-size:25.2px;color:#B41710;-webkit-text-stroke:0.7px #B41710;">Variance: 0% <i>|</i> $0.57 over Bud...</span>
<div style="left:2342.2px;top:1746.4px;width:329.8px;height:12px;border-radius:6px;background:#D9DAE5;overflow:hidden;"><div style="left:0;top:0;width:329.8px;height:12px;border-radius:6px;background:#FBE6E4;border:1.4px solid #E8574C;box-sizing:border-box;"></div></div>
<div style="left:2421.42px;top:1745.4px;width:4.3px;height:14px;background:#fff;"></div>
<div style="left:2504.95px;top:1745.4px;width:4.3px;height:14px;background:#fff;"></div>
<div style="left:2588.47px;top:1745.4px;width:4.3px;height:14px;background:#fff;"></div>
<span style="left:2678.42px;top:1740.00px;font-size:25.2px;color:#B41710;font-weight:700;transform:scaleX(0.9847);">103%</span>
<span style="left:2343.75px;top:1784.00px;font-size:25.2px;color:#B41710;-webkit-text-stroke:0.7px #B41710;">Variance: 3% <i>|</i> $4.59 over Bud...</span>
<div style="left:2729px;top:1743.8px;width:56px;height:56px;border-radius:50%;background:#EFFBFF;border:2px solid #fff;"></div>
<span style="left:2750.88px;top:1763.00px;font-size:21px;color:#0278D5;font-weight:700;">K</span>
<div style="left:2867.8px;top:1758.1px;width:8.4px;height:8.4px;background:#6B6D85;border-radius:50%;"></div>
<div style="left:2867.8px;top:1769.9px;width:8.4px;height:8.4px;background:#6B6D85;border-radius:50%;"></div>
<div style="left:2867.8px;top:1781.7px;width:8.4px;height:8.4px;background:#6B6D85;border-radius:50%;"></div>
<div style="left:0px;top:2006px;width:3060px;height:34px;background:#fff;"></div>
</div></body></html>
